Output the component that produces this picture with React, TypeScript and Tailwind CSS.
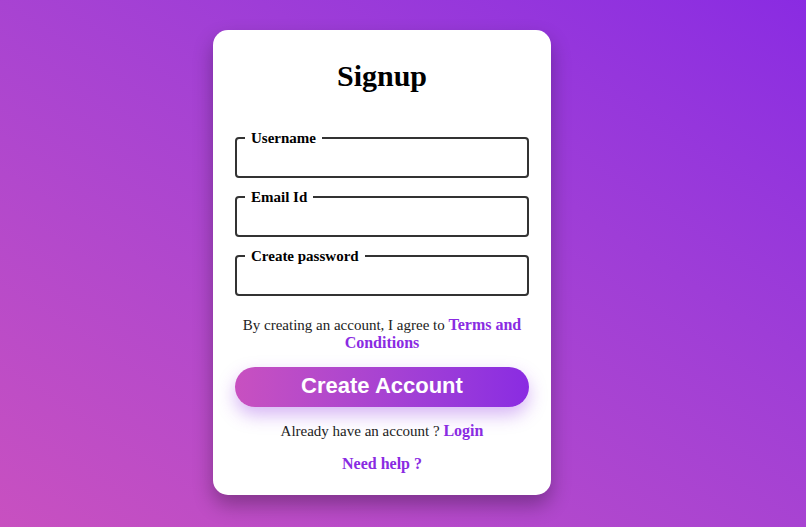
export default function App() {
  const fields = ['Username', 'Email Id', 'Create password'];

  return (
    <div className="min-h-screen w-full bg-linear-to-tr from-[#c850c0] to-[#8a2be2] flex justify-center pt-[30px] pr-[42px] font-['Liberation_Serif',serif] text-black">
      <div className="w-[338px] h-[465px] bg-white rounded-[15px] px-[22px] pt-[29px] shadow-[0_10px_20px_rgba(0,0,0,0.3)] flex flex-col items-center">
        <h1 className="text-[30px] leading-[34px] font-bold">Signup</h1>

        <div className="w-full mt-[36px] flex flex-col gap-[10px]">
          {fields.map((f) => (
            <fieldset key={f} className="border-2 border-[#333] rounded-[4px] px-[8px] h-[49px]">
              <legend className="px-[6px] text-[15px] leading-[18px] font-bold">{f}</legend>
              <input className="block w-full h-[26px] outline-none bg-transparent" />
            </fieldset>
          ))}
        </div>

        <p className="mt-[20px] text-center text-[15px] leading-[18px] text-[#222]">
          By creating an account, I agree to{' '}
          <a className="text-[#8a2be2] font-bold text-[16px] leading-[18px]">Terms and Conditions</a>
        </p>

        <button className="mt-[15px] w-full h-[40px] rounded-full bg-linear-to-r from-[#c850c0] to-[#8a2be2] text-white font-bold text-[22px] leading-[26px] pb-[2px] font-['Liberation_Sans',sans-serif] shadow-[0_8px_18px_rgba(138,43,226,0.35)]">
          Create Account
        </button>

        <p className="mt-[14px] text-[15px] leading-[20px] text-[#222]">
          Already have an account ? <a className="text-[#8a2be2] font-bold text-[16px]">Login</a>
        </p>

        <a className="mt-[13px] text-[#8a2be2] font-bold text-[16px] leading-[20px]">Need help ?</a>
      </div>
    </div>
  );
}
